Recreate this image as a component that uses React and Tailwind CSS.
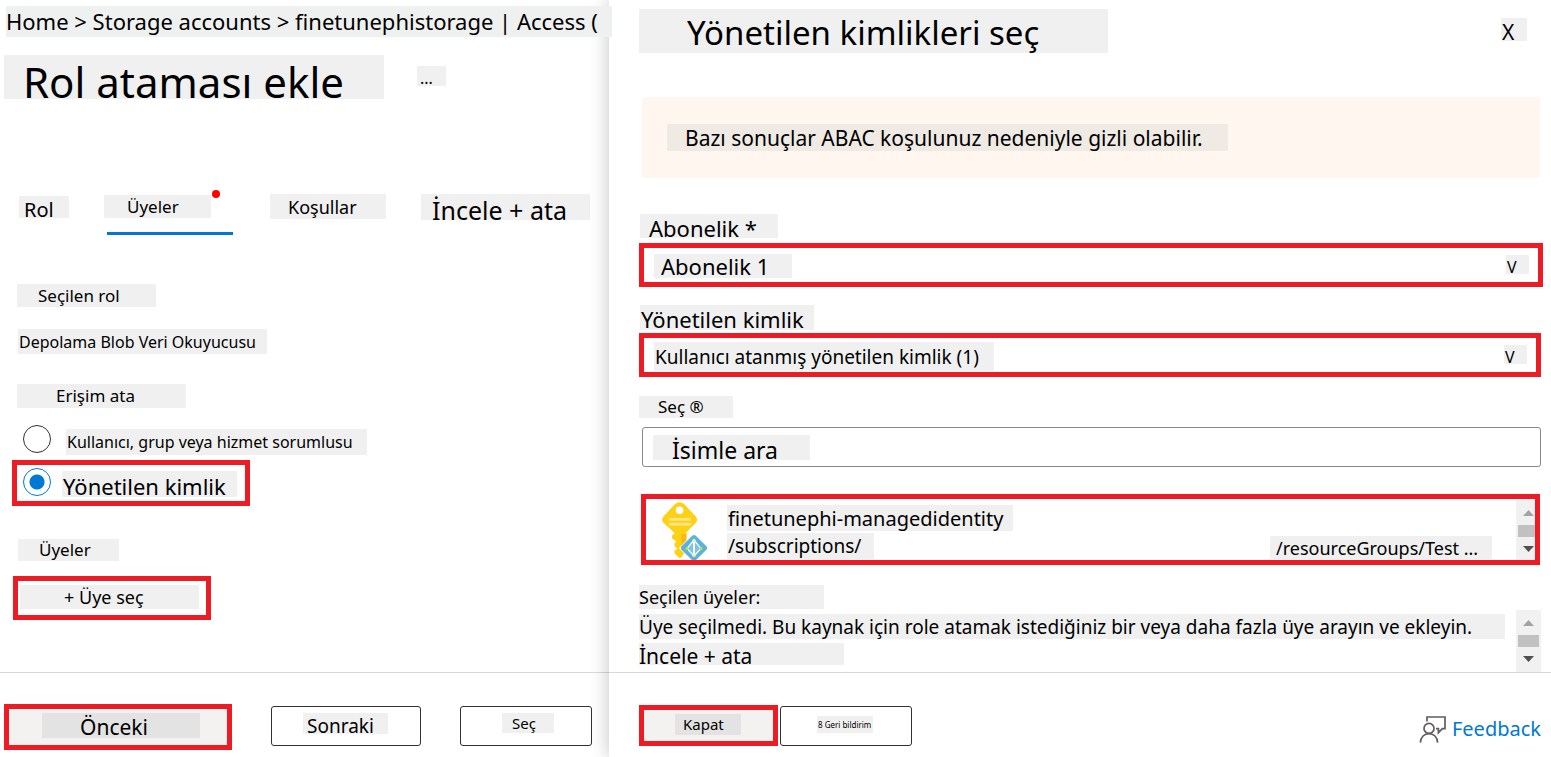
import React from "react";

const CHIP = "block whitespace-nowrap bg-[#f0f0f0] text-left text-black";

function KeyIcon() {
  return (
    <svg width="48" height="58" viewBox="0 0 48 58" className="shrink-0" aria-hidden="true">
      <path d="M11.4 29 L2.2 20.4 Q0 17.6 2.2 14.8 L13.6 2.4 Q18.6 -1.8 23.6 2.4 L35 14.8 Q37.2 17.6 35 20.4 L25.4 30.6 V49 L19 56.4 L13.4 51.6 V49 L16.4 46.6 L13.4 44 V41.6 L15.4 39.6 L11 36.4 V33.6 L13.6 31.6 Z" fill="#fcd116" />
      <path d="M20.4 32 H25.4 V43 L20.4 49 Z" fill="#f9b916" />
      <circle cx="18.6" cy="8.3" r="3.8" fill="#fff" />
      <path d="M8 16 H30 V18.8 H8 Z M8 20.8 H30 V23.6 H8 Z" fill="#fee583" />
      <path d="M33 31 L48 46 L33 61 L18 46 Z" fill="#fff" />
      <path d="M31.2 33.8 Q33 32.2 34.8 33.8 L45.4 44.2 Q47 46 45.4 47.8 L33 60 L20.6 47.8 Q19 46 20.6 44.2 Z" fill="#5bb2db" />
      <path d="M33 38 L26 46.5 L33 54 L40 46.5 Z" fill="#7cc3e4" stroke="#fff" strokeWidth="1.2" />
      <path d="M33 38 V54" stroke="#fff" strokeWidth="2" />
      <circle cx="33" cy="38.5" r="1.7" fill="#e4f2a6" />
      <circle cx="26" cy="46.5" r="1.5" fill="#c5dc50" />
      <circle cx="40" cy="46.5" r="1.5" fill="#c5dc50" />
      <circle cx="33" cy="53.6" r="1.7" fill="#e4f2a6" />
    </svg>
  );
}

function FeedbackIcon() {
  return (
    <svg width="28" height="28" viewBox="0 0 28 28" fill="none" stroke="#605e5c" strokeWidth="1.7" aria-hidden="true">
      <path d="M8 6.4 V2 H26 V13.6 H23.4 L19.4 17.6 V13.6 H17" />
      <circle cx="10" cy="13.4" r="5" />
      <path d="M1.4 27.6 C1.6 22 5.4 18.6 10 18.6 S18.4 22 18.6 27.6" />
    </svg>
  );
}

function ScrollTrack() {
  return (
    <svg width="25" height="62" viewBox="0 0 25 62" className="block" aria-hidden="true">
      <path d="M0 0 H25 V62 H0 Z" fill="#f1f1f1" />
      <path d="M7 16 L12.5 10 L18 16 Z" fill="#a3a3a3" />
      <path d="M2 25 H23 V37 H2 Z" fill="#c1c1c1" />
      <path d="M7 46 L12.5 52 L18 46 Z" fill="#505050" />
    </svg>
  );
}

function Chevron() {
  return (
    <span aria-hidden="true" className="pointer-events-none absolute top-3 right-[14px] block h-[19px] w-[23px] bg-[#f0f0f0] pl-[1px] text-base leading-6">
      V
    </span>
  );
}

export default function App() {
  return (
    <div className="grid min-h-screen grid-cols-[609fr_942fr] bg-white font-['Noto_Sans',sans-serif] text-black">
      <main className="flex min-w-0 flex-col">
        <nav aria-label="Breadcrumb" className="relative z-10 pt-[6px] pl-[6px]">
          <a href="#access" className="block h-[31px] w-[606px] bg-[#eff1f0] text-[22px] leading-[31px] whitespace-nowrap">
            Home &gt; Storage accounts &gt; finetunephistorage | Access (
          </a>
        </nav>
        <header className="mt-[18px] flex items-start gap-[33px] pl-1">
          <h1 className={`${CHIP} h-11 w-[380px] pl-[19px] text-[42px] leading-[54px]`}>Rol ataması ekle</h1>
          <button type="button" aria-label="Diğer" className={`${CHIP} mt-[11px] h-5 w-[29px] pl-[3px] text-base leading-6`}>...</button>
        </header>

        <div role="tablist" className="mt-[95px] flex items-start gap-[35px] pl-[19px]">
          <button type="button" role="tab" className={`${CHIP} mt-[2px] h-[22px] w-[50px] pl-[5px] text-[20px] leading-7`}>Rol</button>
          <button type="button" role="tab" aria-selected="true" className="relative w-[131px]">
            <span className={`${CHIP} mt-[1px] h-[23px] w-[107px] pl-[23px] text-[17px] leading-6`}>Üyeler</span>
            <span className="absolute -top-1 left-[108px] size-2 rounded-full bg-[#ff0000]" />
            <span className="mt-[14px] ml-[3px] block h-[3px] w-[126px] bg-[#0078d4]" />
          </button>
          <button type="button" role="tab" className={`${CHIP} h-[25px] w-[116px] pl-[18px] text-[18px] leading-[26px]`}>Koşullar</button>
          <button type="button" role="tab" className={`${CHIP} h-[26px] w-[169px] pl-[11px] text-[25px] leading-[32px]`}>İncele + ata</button>
        </div>

        <div className="flex flex-1 flex-col items-start pb-[52px] pl-3">
          <h2 className={`${CHIP} mt-[49px] ml-[5px] h-[23px] w-[139px] pl-[21px] text-[17px] leading-[23px]`}>Seçilen rol</h2>
          <p className={`${CHIP} mt-[22px] ml-[6px] h-[25px] w-[249px] pl-[1px] text-base leading-[27px]`}>Depolama Blob Veri Okuyucusu</p>
          <h2 id="assign" className={`${CHIP} mt-[30px] ml-[5px] h-6 w-[169px] pl-[39px] text-[17px] leading-6`}>Erişim ata</h2>
          <div role="radiogroup" aria-labelledby="assign" className="mt-[17px]">
            <label className="flex h-[30px] items-start pl-[11px]">
              <input type="radio" name="assignee" className="size-7 appearance-none rounded-full border border-[#323130]" />
              <span className={`${CHIP} mt-1 ml-[15px] h-[26px] w-[301px] pl-[1px] text-base leading-[26px]`}>Kullanıcı, grup veya hizmet sorumlusu</span>
            </label>
            <label className="mt-[5px] flex h-[46px] w-[238px] items-start border-5 border-[#ed1c24] pt-[3px] pl-[6px]">
              <input
                type="radio"
                name="assignee"
                defaultChecked
                className="size-7 appearance-none rounded-full border border-[#0078d4] bg-[radial-gradient(circle,#0078d4_7px,#ffffff_8px)]"
              />
              <span className={`${CHIP} mt-[3px] ml-[11px] h-[26px] w-[175px] pl-[1px] text-[22px] leading-[31px]`}>Yönetilen kimlik</span>
            </label>
          </div>
          <h2 className={`${CHIP} mt-[33px] ml-[6px] h-[22px] w-[101px] pl-[21px] text-[17px] leading-[22px]`}>Üyeler</h2>
          <button type="button" className="mt-[15px] ml-[1px] flex h-11 w-[198px] items-start border-5 border-[#ed1c24] pt-1 pl-[2px]">
            <span className={`${CHIP} h-6 w-[179px] pl-11 text-[18px] leading-6`}>+ Üye seç</span>
          </button>
        </div>

        <footer className="flex h-[85px] items-start border-t border-[#d9d9d9] pl-1">
          <button type="button" className="mt-[31px] flex h-[46px] w-[228px] items-start border-5 border-[#ed1c24] bg-[#f3f2f1] pt-1 pl-[33px]">
            <span className="block h-[25px] w-[158px] bg-[#e3e3e3] pl-[38px] text-left text-[21px] leading-7">Önceki</span>
          </button>
          <button type="button" className="mt-[33px] ml-[39px] flex h-10 w-[150px] items-start rounded-[3px] border border-[#323130] pt-[6px] pl-[31px]">
            <span className={`${CHIP} h-[21px] w-[85px] pl-1 text-[19px] leading-[27px]`}>Sonraki</span>
          </button>
          <button type="button" className="mt-[33px] ml-[39px] flex h-10 w-[132px] items-start rounded-[3px] border border-[#323130] pt-[6px] pl-[41px]">
            <span className={`${CHIP} h-5 w-[52px] pl-[10px] text-[15px] leading-5`}>Seç</span>
          </button>
        </footer>
      </main>

      <aside className="flex min-w-0 flex-col bg-white shadow-[0_0_18px_rgba(0,0,0,0.24)]">
        <div className="flex-1 pr-[10px] pl-[30px]">
          <header className="flex items-start justify-between pt-[9px] pr-[14px]">
            <h2 className={`${CHIP} h-11 w-[469px] pl-12 text-[33px] leading-[47px]`}>Yönetilen kimlikleri seç</h2>
            <button type="button" aria-label="Kapat" className={`${CHIP} mt-[9px] h-[23px] w-[26px] pl-[1px] text-[21px] leading-7`}>X</button>
          </header>

          <div role="status" className="mt-11 mr-[1px] ml-[3px] flex h-[81px] items-center rounded-[3px] bg-[#fff6f0] pl-[25px]">
            <p className="block h-[27px] w-[561px] bg-[#efeae4] pl-[18px] text-[21px] leading-[29px] whitespace-nowrap">
              Bazı sonuçlar ABAC koşulunuz nedeniyle gizli olabilir.
            </p>
          </div>

          <label htmlFor="subscription" className={`${CHIP} mt-9 ml-[1px] h-6 w-[138px] pl-[9px] text-[22px] leading-7`}>Abonelik *</label>
          <div className="relative mt-[5px] -mr-[2px]">
            <select
              id="subscription"
              className="block h-11 w-full appearance-none border-5 border-[#ed1c24] bg-[linear-gradient(#f0f0f0,#f0f0f0)] bg-[length:138px_24px] bg-[position:10px_6px] bg-no-repeat pt-[2px] pl-[17px] text-[22px]"
            >
              <option>Abonelik 1</option>
            </select>
            <Chevron />
          </div>

          <label htmlFor="identity" className={`${CHIP} mt-[18px] ml-[1px] h-[25px] w-[174px] pl-[1px] text-[22px] leading-7`}>Yönetilen kimlik</label>
          <div className="relative mt-[3px]">
            <select
              id="identity"
              className="block h-11 w-full appearance-none border-5 border-[#ed1c24] bg-[linear-gradient(#f0f0f0,#f0f0f0)] bg-[length:340px_29px] bg-[position:10px_4px] bg-no-repeat pt-1 pl-[11px] text-[19px]"
            >
              <option>Kullanıcı atanmış yönetilen kimlik (1)</option>
            </select>
            <Chevron />
          </div>

          <label htmlFor="search" className={`${CHIP} mt-[19px] h-[22px] w-[94px] pl-[19px] text-[17px] leading-[22px]`}>Seç ®</label>
          <div className="mt-[9px] pl-[3px]">
            <input
              id="search"
              type="text"
              placeholder="İsimle ara"
              className="block h-10 w-full rounded-[3px] border border-[#8a8886] bg-[linear-gradient(#f0f0f0,#f0f0f0)] bg-[length:157px_25px] bg-[position:10px_7px] bg-no-repeat pt-[6px] pl-[29px] text-[23px] placeholder:text-black"
            />
          </div>

          <div className="mt-[27px] mr-[1px] ml-[2px] flex h-[71px] items-start overflow-hidden border-5 border-[#ed1c24] pl-[15px]">
            <div className="pt-[3px]">
              <KeyIcon />
            </div>
            <div className="min-w-0 flex-1 pt-[6px] pl-[18px]">
              <p className={`${CHIP} h-[26px] w-[286px] pl-[1px] text-[20px] leading-7`}>finetunephi-managedidentity</p>
              <div className="mt-[2px] flex items-start justify-between pr-6">
                <p className={`${CHIP} h-[26px] w-[147px] pl-[1px] text-[19px] leading-[26px]`}>/subscriptions/</p>
                <p className={`${CHIP} mt-[3px] h-[23px] w-[222px] pl-[6px] text-[18px] leading-6`}>/resourceGroups/Test ...</p>
              </div>
            </div>
            <div className="w-[19px] overflow-hidden pt-[1px]">
              <ScrollTrack />
            </div>
          </div>

          <div className="mt-5 flex items-end justify-between">
            <div>
              <p className={`${CHIP} h-6 w-[185px] text-[18px] leading-6`}>Seçilen üyeler:</p>
              <p className={`${CHIP} mt-[5px] h-[25px] w-[866px] text-[19px] leading-[26px]`}>
                Üye seçilmedi. Bu kaynak için role atamak istediğiniz bir veya daha fazla üye arayın ve ekleyin.
              </p>
              <p className={`${CHIP} mt-1 mb-[7px] h-[22px] w-[205px] text-[21px] leading-[26px]`}>İncele + ata</p>
            </div>
            <ScrollTrack />
          </div>
        </div>

        <footer className="flex h-[85px] items-start border-t border-[#d9d9d9] pr-[10px] pl-[30px]">
          <button type="button" className="mt-8 flex h-[41px] w-[139px] items-start border-5 border-[#ed1c24] bg-[#f3f2f1] pt-[4px] pl-[31px]">
            <span className="block h-[21px] w-[66px] bg-[#e3e3e3] pl-2 text-left text-[15px] leading-[21px]">Kapat</span>
          </button>
          <button type="button" className="mt-[33px] ml-[2px] flex h-10 w-[132px] items-start rounded-[3px] border border-[#323130] pt-[9px] pl-9">
            <span className={`${CHIP} h-[17px] w-14 pl-[1px] text-[8px] leading-[17px]`}>8 Geri bildirim</span>
          </button>
          <a href="#feedback" className="mt-10 ml-auto flex items-center gap-[5px] text-[20px] leading-8 text-[#0078d4]">
            <FeedbackIcon />
            Feedback
          </a>
        </footer>
      </aside>
    </div>
  );
}
